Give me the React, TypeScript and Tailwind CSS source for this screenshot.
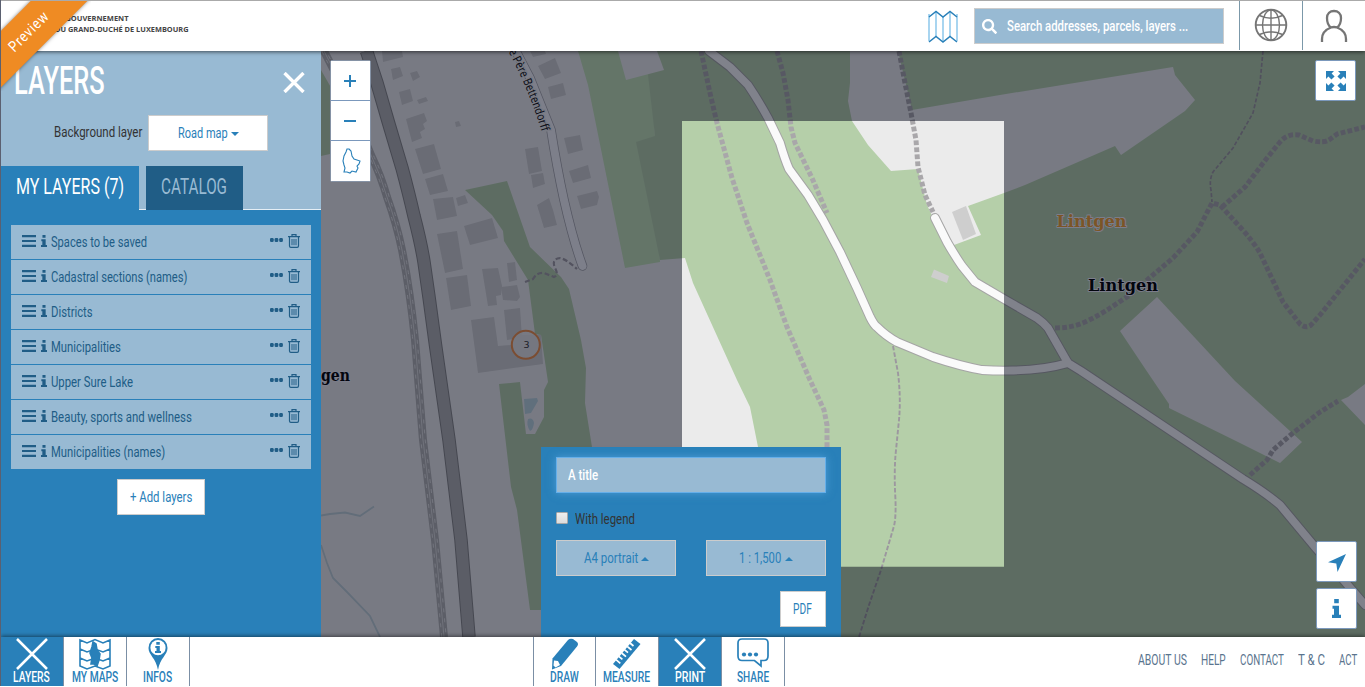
import React, { useLayoutEffect, useRef, useState } from "react";
import { FaSearch } from "react-icons/fa";

const din = "font-['Roboto','Liberation_Sans',sans-serif]";

/* Narrow lettering: squeezes the text horizontally to the given width. */
function Fit({ w, children, className = "pt-0.5" }: { w: number; children: string; className?: string }) {
  const ref = useRef<HTMLSpanElement>(null);
  const [s, setS] = useState(0.8);
  useLayoutEffect(() => {
    if (ref.current) setS(w / ref.current.offsetWidth);
  }, [w, children]);
  return (
    <span className={`inline-block shrink-0 ${className}`} style={{ width: w }}>
      <span ref={ref} className="inline-block origin-left whitespace-nowrap" style={{ transform: `scaleX(${s})` }}>
        {children}
      </span>
    </span>
  );
}

const buildings = [
  "382,51 383,62 403,57 402,51",
  "391,69 400,67 403,76 393,80",
  "410,73 417,71 420,77 413,81",
  "399,92 410,89 413,101 402,105",
  "417,100 426,97 428,101 419,104",
  "406,119 424,113 427,121 423,124 425,129 420,132 422,138 412,142",
  "455,122 459,121 461,126 456,127",
  "415,149 434,144 441,169 423,174",
  "425,179 443,174 448,191 430,195",
  "433,199 453,197 457,216 437,220",
  "456,198 465,195 468,203 458,206",
  "464,226 492,218 498,238 470,245",
  "437,234 457,231 463,269 445,273",
  "446,278 467,275 471,306 451,310",
  "482,269 498,268 502,286 501,295 496,296 497,305 488,306",
  "507,263 515,262 517,280 509,282",
  "501,287 517,285 520,297 517,301 503,300",
  "504,310 520,308 522,338 507,340",
  "471,320 494,317 498,346 511,345 515,335 541,335 543,364 478,373",
  "538,66 555,58 561,73 545,79",
  "548,87 563,83 566,95 551,99",
  "530,51 533,57 546,54 545,51",
  "564,138 580,135 583,150 568,154",
  "569,171 588,165 591,178 573,183",
  "577,196 597,191 599,197 597,205 581,209",
  "525,149 538,147 542,171 529,174",
  "531,175 543,173 545,184 533,188",
  "537,205 549,198 553,210 557,225 544,228",
];

const roads = [
  "M709 51L730 67L748 85Q760 103 768 118L780 143Q785 160 789 169L808 195L823 220L840 252L857 288L870 317Q874 325 877 327Q886 336 897 342L933 357Q960 366 982 370Q1000 371 1013 370.500Q1044 370 1068 363",
  "M935 218L947 242Q955 256 962 266L975 282L1004 299L1037 318Q1044 323 1048 328L1068 363L1081 371L1243 479Q1266 493 1280 505L1315 547L1365 605",
];
const tracks = [
  "M701 51L710 93L717 123L732 178L747 223L770 280L787 327L810 380L824 410L827 425V447",
  "M777 51L783 73L788 100L791 127L795 143L812 178L827 213",
  "M899 51L905 83L911 113L916 140L918 167L925 195L933 212",
  "M1055 328Q1072 328 1085 322Q1100 315 1110 308L1130 295L1147 280L1173 258L1197 232L1212 203L1220 205L1240 227Q1253 241 1260 253L1283 302L1300 324Q1306 329 1311 325L1320 315L1365 259",
  "M1222 207L1245 187L1267 158L1280 142Q1288 133 1299 135L1313 141Q1324 143 1329 140L1337 134L1365 127",
  "M1250 475L1267 460L1273 450L1293 433L1320 412L1338 401",
];
const rail = "M324 51L345 92L371 155Q381 176 387 197Q397 225 402 250Q410 290 415 340L423 440L435 540L444 637";

function MapView() {
  return (
    <svg className="absolute inset-0 h-full w-full" viewBox="321 51 1044 586" preserveAspectRatio="none">
      <rect x="321" y="51" width="1044" height="586" fill="#ebebeb" />
      <path d="M321 70L345 112L336 148L330 154L321 156Z" fill="#b5cfa9" />
      <path d="M578 51H660L652 74L655 136L660 262L625 268L588 85Z" fill="#c2e0b5" />
      <path d="M655 51H1365V637H800L758 447L750 407L737 380L693 283L685 258L660 260L636 142L655 136L648 75Z" fill="#b5cfa9" />
      <path d="M618 51L626 80L664 70L657 51Z" fill="#ebebeb" />
      <path d="M465 190L507 181L530 247L561 277L569 289L581 340L586 368L585 403L592 447L600 610H530L517 510L511 487L499 384L520 382L526 434H535L544 417V390L548 382L541 335L535 334L528 280L504 241L503 231L492 215Z" fill="#b5cfa9" />
      <path d="M850 51V83L848 101L852 121L868 145L891 171L918 169L927 205L935 222L947 240L954 245L981 235L968 206L1004 193L1025 185L1115 146L1121 155L1185 111L1195 100L1175 75L1173 67L1000 95L912 110L898 51Z" fill="#ebebeb" />
      <path d="M1157 297L1120 331L1146 370L1169 404V408L1238 442L1280 463L1302 442L1235 381Z" fill="#ebebeb" />
      <path d="M1341 400L1348 397L1365 384V425Z" fill="#ebebeb" />
      <path d="M524 399L537 398L538 401L531 413L525 414ZM528 419Q533 417 534 423Q533 430 530 431Q526 425 528 419Z" fill="#bbd4dd" />
      <path d="M321 515.500L330 514L345 512.500L360 516L374 506.500M321 545L327 563L333 578L347 592L370 616L380 637" fill="none" stroke="#bfd0d6" strokeWidth="1.800" />
      {buildings.map((p) => (
        <polygon key={p} points={p} fill="#cecece" />
      ))}
      <polygon points="952,212 966,206 976,234 963,240" fill="#cecece" />
      <polygon points="934,269.500 949,276 947,283 931,277" fill="#cecece" />
      <path d={rail} fill="none" stroke="#b2b2b2" strokeWidth="8" />
      <path d={rail} fill="none" stroke="#e4e4e4" strokeWidth="0.800" />
      <path d={rail} transform="translate(-2.200 0)" fill="none" stroke="#e0e0e0" strokeWidth="1" strokeDasharray="4 6" />
      <path d={rail} transform="translate(2.200 0)" fill="none" stroke="#e0e0e0" strokeWidth="1" strokeDasharray="4 6" strokeDashoffset="5" />
      {[["#858585", 13.5], ["#b1b1b1", 11.5]].map(([c, w]) => (
        <path key={c} d="M366.500 51L377 83L388 121L402 168Q409 194 414 216Q421 243 424 262L429 297L435.500 345L449 440L461 540L469 637" fill="none" stroke={c as string} strokeWidth={w} />
      ))}
      {tracks.map((d) => (
        <path key={d} d={d} fill="none" stroke="#a9a7aa" strokeWidth="5" strokeDasharray="4.800 2.200" />
      ))}
      <path d="M1263 51L1260 83L1253 113L1233 148L1213 172Q1209 180 1211 190L1212 202" fill="none" stroke="#9c979f" strokeWidth="1.700" strokeDasharray="4 2" />
      <path d="M893 346L898 373Q901 398 899 420L895.500 455Q894 475 895.500 500Q896 518 894 526L881 570L869 605L859 637" fill="none" stroke="#9c979f" strokeWidth="1.900" strokeDasharray="4.500 2" />
      <path d="M525 282L533 279Q537 272 544 273L554 277Q559 275 555 268Q551 259 560 258Q566 259 577 269" fill="none" stroke="#a09ca3" strokeWidth="2.200" strokeDasharray="5 2.500" />
      <path d="M510 40L530 78L551 130Q557 168 564 200Q573 240 582.500 266" fill="none" stroke="#a3a3a8" strokeWidth="9.500" strokeLinecap="round" />
      <path d="M510 40L530 78L551 130Q557 168 564 200Q573 240 582.500 266" fill="none" stroke="#f5f5f8" strokeWidth="8" strokeLinecap="round" />
      {roads.map((d) => (
        <path key={d} d={d} fill="none" stroke="#a5a5a5" strokeWidth="9.800" strokeLinecap="round" />
      ))}
      {roads.map((d) => (
        <path key={d} d={d} fill="none" stroke="#fafafa" strokeWidth="7.800" strokeLinecap="round" strokeLinejoin="round" />
      ))}
      <path id="street" d="M508.500 51.500Q530 92 543 136" fill="none" />
      <text textLength="87" lengthAdjust="spacingAndGlyphs" className="font-['Noto_Sans',sans-serif] text-[12px]" fill="#111" stroke="#ebebeb" strokeWidth="3" paintOrder="stroke">
        <textPath href="#street" textLength="87" lengthAdjust="spacingAndGlyphs">e Père Bettendorff</textPath>
      </text>
      <circle cx="525.800" cy="344.800" r="14" fill="#ebebeb" fillOpacity="0.800" stroke="#f09048" strokeWidth="2" />
      <text x="526.500" y="348.300" textAnchor="middle" className="font-['DejaVu_Sans',sans-serif] text-[9.500px]" fill="#333">3</text>
      <g className="font-['DejaVu_Serif',serif] text-[16.5px] font-bold" paintOrder="stroke" stroke="#f0f0fa" strokeWidth="1.800" strokeLinejoin="round">
        <text x="1056.500" y="227" textLength="70" lengthAdjust="spacingAndGlyphs" fill="#f0a030">Lintgen</text>
        <text x="1088" y="291" textLength="70" lengthAdjust="spacingAndGlyphs" fill="#000">Lintgen</text>
        <text x="321" y="381" textLength="29" lengthAdjust="spacingAndGlyphs" fill="#000">gen</text>
      </g>
      <path fillRule="evenodd" d="M321 51H1365V637H321ZM682 121V566.700H1004V121Z" fill="rgb(5,9,27)" fillOpacity="0.500" />
    </svg>
  );
}

const layers: [string, number][] = [
  ["Spaces to be saved", 96],
  ["Cadastral sections (names)", 136],
  ["Districts", 42],
  ["Municipalities", 70],
  ["Upper Sure Lake", 82],
  ["Beauty, sports and wellness", 141],
  ["Municipalities (names)", 114],
];

function InfoGlyph({ className }: { className: string }) {
  return (
    <svg viewBox="0 0 9 19" preserveAspectRatio="none" className={className} fill="currentColor">
      <path d="M2.200 0H6.800V4.300H2.200ZM.5 6.800H7V15.800H9V19H0V15.800H2V9.800H.5Z" />
    </svg>
  );
}

function LayerRow({ name, w }: { name: string; w: number }) {
  return (
    <li className="flex h-[34px] items-center bg-[#98bad3] px-[11px] text-[#205d86]">
      <svg width="14" height="12" viewBox="0 0 14 12" className="mb-0.5 shrink-0">
        <path d="M0 1.200H14M0 6H14M0 10.800H14" stroke="currentColor" strokeWidth="2.200" />
      </svg>
      <InfoGlyph className="mb-[3px] ml-[5px] h-[12px] w-[6px] shrink-0" />
      <Fit w={w} className="ml-1 pt-0.5 text-[14.5px] leading-5">{name}</Fit>
      <svg width="13" height="5" viewBox="0 0 13 5" className="mb-[3px] ml-auto shrink-0" fill="currentColor">
        <rect width="3.700" height="4" rx="1.200" />
        <rect x="4.600" width="3.700" height="4" rx="1.200" />
        <rect x="9.200" width="3.700" height="4" rx="1.200" />
      </svg>
      <svg width="12" height="14" viewBox="0 0 12 14" className="mb-0.5 ml-[5px] shrink-0" fill="none" stroke="currentColor">
        <path d="M0 2.700H12M4 2.500V.7H8V2.500M1.500 3V12Q1.500 13.400 2.900 13.400H9.100Q10.500 13.400 10.500 12V3" strokeWidth="1.200" />
        <path d="M4 5V11.200M6 5V11.200M8 5V11.200" strokeWidth="1" />
      </svg>
    </li>
  );
}

function Panel() {
  return (
    <aside className="flex w-[320px] shrink-0 flex-col bg-[#2980b9]">
      <div className="h-[159px] border-b border-[#e4eef5] bg-[#98bad3]">
        <div className="flex h-[60px] items-center justify-between pl-[13px] pr-4 text-white">
          <Fit w={91} className="text-[38px] font-medium leading-[58px]">LAYERS</Fit>
          <svg width="22" height="21" viewBox="0 0 22 21" className="mt-0.5">
            <path d="M1.500 1L20.500 20M20.500 1L1.500 20" stroke="currentColor" strokeWidth="3.400" />
          </svg>
        </div>
        <div className="mt-1 flex h-9 items-center pl-[53px]">
          <Fit w={88} className="text-[14.5px] leading-5 text-[#333]">Background layer</Fit>
          <button className="ml-[6px] flex h-9 w-[120px] items-center justify-center gap-[3px] border border-[#ccc] bg-white text-[14.5px] text-[#2980b9]">
            <Fit w={50}>Road map</Fit>
            <Caret />
          </button>
        </div>
        <div className="mt-[15px] flex h-11 gap-[7px] text-[21.5px]">
          <div className="flex h-11 w-[138px] items-center bg-[#2980b9] pb-px pl-[15px] text-white">
            <Fit w={108} className="">MY LAYERS (7)</Fit>
          </div>
          <div className="flex h-11 w-[97px] items-center bg-[#205d86] pb-px pl-[15px] text-[#98bad3]">
            <Fit w={66} className="">CATALOG</Fit>
          </div>
        </div>
      </div>
      <ul className="mx-[10px] mt-[15px] flex flex-col gap-px">
        {layers.map(([name, w]) => (
          <LayerRow key={name} name={name} w={w} />
        ))}
      </ul>
      <button className="mt-[10px] flex h-9 w-[88px] items-center justify-center self-center border border-[#ccc] bg-white text-[14.5px] text-[#2980b9]">
        <Fit w={62}>+ Add layers</Fit>
      </button>
    </aside>
  );
}

function Caret({ up = false }: { up?: boolean }) {
  return (
    <svg width="8" height="4" viewBox="0 0 8 4" className="mt-px">
      <path d={up ? "M0 4L4 0L8 4Z" : "M0 0L4 4L8 0Z"} fill="currentColor" />
    </svg>
  );
}

function PrintPanel() {
  return (
    <div className="absolute bottom-0 left-[220px] flex h-[190px] w-[300px] flex-col bg-[#2980b9] px-[15px] pt-[10px] text-[14.5px] text-[#2980b9]">
      <div className="flex h-9 items-center border border-[#66afe9] bg-[#98bad3] pl-[11px] text-white shadow-[0_0_8px_rgba(102,175,233,0.6)]">
        <Fit w={30} className="pt-0.5 font-medium">A title</Fit>
      </div>
      <label className="mt-[15px] flex h-5 items-center text-[#333]">
        <span className="h-3 w-3 rounded-[1px] border border-[#a9a9a9] bg-gradient-to-b from-[#eee] to-[#ddd]" />
        <Fit w={60} className="ml-[7px] mt-1">With legend</Fit>
      </label>
      <div className="mt-3 flex justify-between">
        <button className="flex h-9 w-[120px] items-center justify-center gap-[3px] border border-[#ccc] bg-[#98bad3]">
          <Fit w={54}>A4 portrait</Fit>
          <Caret up />
        </button>
        <button className="flex h-9 w-[120px] items-center justify-center gap-1 border border-[#ccc] bg-[#98bad3]">
          <Fit w={42}>1 : 1,500</Fit>
          <Caret up />
        </button>
      </div>
      <button className="mt-[15px] flex h-9 w-[46px] items-center justify-center self-end border border-[#ccc] bg-white pr-px">
        <Fit w={19}>PDF</Fit>
      </button>
    </div>
  );
}

function MapControls() {
  const cell = "flex h-10 items-center justify-center bg-white text-[#2980b9]";
  return (
    <>
      <div className="absolute left-[9px] top-[9px] flex w-[41px] flex-col divide-y divide-[#7b98bc] rounded-[2px] border border-[#8592a5] bg-white">
        <div className={`${cell} pr-px`}>
          <svg width="12" height="12" viewBox="0 0 12 12"><path d="M0 6H12M6 0V12" stroke="currentColor" strokeWidth="2" /></svg>
        </div>
        <div className={`${cell} pr-px`}>
          <svg width="12" height="12" viewBox="0 0 12 12"><path d="M0 6H12" stroke="currentColor" strokeWidth="2" /></svg>
        </div>
        <div className={cell}>
          <svg width="19" height="26" viewBox="0 0 19 26" className="ml-0.5" fill="none" stroke="currentColor" strokeWidth="1.100">
            <path d="M7 1L9 3L10 8L12 11L15 12L18 13L17 16L15 18L16 20L14 24L10 23L8 25L5 24L2 24L3 20L2 17L1 13L2 8L4 4L5 1Z" />
          </svg>
        </div>
      </div>
      <div className="absolute right-[9px] top-[9px] flex h-[41px] w-[41px] items-center justify-center rounded-[2px] border border-[#7b98bc] bg-white text-[#2980b9]">
        <svg width="20" height="20" viewBox="0 0 20 20" fill="currentColor">
          <path id="arrow" d="M0 0H8L5.600 2.400L8.600 5.400L5.400 8.600L2.400 5.600L0 8Z" />
          <use href="#arrow" transform="translate(20 0) scale(-1 1)" />
          <use href="#arrow" transform="translate(0 20) scale(1 -1)" />
          <use href="#arrow" transform="translate(20 20) scale(-1 -1)" />
        </svg>
      </div>
      <div className="absolute bottom-2 right-2 flex flex-col gap-[6px] text-[#2980b9]">
        <div className="flex h-[41px] w-[41px] items-center justify-center rounded-[2px] border border-[#7b98bc] bg-white">
          <svg width="18" height="18" viewBox="0 0 18 18" fill="currentColor" className="mt-0.5">
            <path d="M18 0L9.500 18L8.300 9.500L0 8.300Z" />
          </svg>
        </div>
        <div className="flex h-[41px] w-[41px] items-center justify-center rounded-[2px] border border-[#7b98bc] bg-white">
          <InfoGlyph className="h-[19px] w-[9px]" />
        </div>
      </div>
    </>
  );
}

function Header() {
  return (
    <header className="relative z-10 flex h-[51px] shrink-0 border-t border-[#aaa] bg-white shadow-[0_1px_4px_rgba(0,0,0,0.6)]">
      <div className="flex w-[320px] flex-col pl-[54px] pt-[12px] font-['Open_Sans',sans-serif] text-[7px] font-bold leading-[11px] text-[#444]">
        <Fit w={74} className="">LE GOUVERNEMENT</Fit>
        <Fit w={134} className="">DU GRAND-DUCHÉ DE LUXEMBOURG</Fit>
      </div>
      <svg width="30" height="34" viewBox="0 0 30 34" className="ml-auto mr-4 mt-[9px]" fill="none">
        <path d="M1 4V31M8 1.500V27M15 6V31M22 1.500V27M29 4V31" stroke="#70b9e6" strokeWidth="1.200" />
        <path d="M1 7L8 1.500L15 7L22 1.500L29 7M1 32L8 26.500L15 32L22 26.500L29 32" stroke="#2980b9" strokeWidth="1.500" />
      </svg>
      <div className="mt-[7px] flex h-9 w-[250px] items-center border border-[#ccc] bg-[#98bad3] pl-[7px] text-white">
        <FaSearch className="h-[15px] w-[15px]" />
        <Fit w={181} className="ml-[10px] pt-0.5 text-[14.5px] font-medium">Search addresses, parcels, layers ...</Fit>
      </div>
      <div className="ml-[15px] flex h-[49px] w-[63px] items-center justify-center border-l border-[#7b98a9] pb-0.5">
        <svg width="34" height="34" viewBox="0 0 34 34" fill="none" stroke="#757575" strokeWidth="1.400">
          <circle cx="17" cy="17" r="15.300" strokeWidth="1.900" />
          <path d="M17 2V32M2 17H32M5.500 7.500Q17 13 28.500 7.500M5.500 26.500Q17 21 28.500 26.500" />
          <ellipse cx="17" cy="17" rx="8.500" ry="15" />
        </svg>
      </div>
      <div className="flex h-[49px] w-[63px] items-center justify-center border-l border-[#7b98a9]">
        <svg width="28" height="34" viewBox="0 0 28 34" fill="none" stroke="#757575" strokeWidth="2.300">
          <path d="M2 33V30Q2 22 11 18.500C8 16.500 7 13 7 9C7 4.500 10 2 14 2C18 2 21 4.500 21 9C21 13 20 16.500 17 18.500Q26 22 26 30V33M11 18.500Q14 17.500 17 18.500" />
        </svg>
      </div>
    </header>
  );
}

const cross = (
  <svg width="32" height="32" viewBox="0 0 32 32"><path d="M1 1L31 31M31 1L1 31" stroke="currentColor" strokeWidth="2.500" /></svg>
);

function Tool({ label, w, active, narrow, children }: { label: string; w: number; active?: boolean; narrow?: boolean; children: React.ReactNode }) {
  return (
    <div className={`flex h-[49px] flex-col items-center border-r border-[#7b8fa5] ${narrow ? "w-[62px]" : "w-[63px]"} ${active ? "bg-[#2980b9] text-white" : "bg-white text-[#2980b9]"}`}>
      <div className="flex h-[33px] items-center justify-center pt-px">{children}</div>
      <Fit w={w} className="mr-px text-[14.5px] font-medium leading-[15px]">{label}</Fit>
    </div>
  );
}

function Footer() {
  return (
    <footer className="relative z-10 flex h-[49px] shrink-0 bg-white shadow-[0_-1px_4px_rgba(0,0,0,0.5)]">
      <nav className="flex w-[532px]">
        <Tool label="LAYERS" w={37} active>{cross}</Tool>
        <Tool label="MY MAPS" w={46}>
          <svg width="32" height="32" viewBox="0 0 32 32" fill="none" stroke="currentColor" strokeWidth="1.600">
            <path d="M1 2L8 5L16 1.500L24 5L31 2V28L24 31L16 28L8 31L1 28ZM1 11L8 14L16 11L24 14L31 11M1 20L8 23L16 20L24 23L31 20" />
            <path d="M14 4L17 6L18 12L21 16L20 22L18 28L15 26L12 26L13 20L11 15L13 9Z" fill="currentColor" />
          </svg>
        </Tool>
        <Tool label="INFOS" w={29}>
          <svg width="20" height="32" viewBox="0 0 20 32">
            <path d="M10 0A9.600 9.600 0 0 0 .5 10C.5 17 8 20 10 32C12 20 19.500 17 19.500 10A9.600 9.600 0 0 0 10 0Z" fill="currentColor" />
            <circle cx="10" cy="9.700" r="7.600" fill="#fff" />
            <path d="M8.300 4H11.800V6.700H8.300ZM7.300 8H11.800V13H13V15H7V13H8.500V10H7.300Z" fill="currentColor" />
          </svg>
        </Tool>
      </nav>
      <nav className="flex border-l border-[#7b8fa5]">
        <Tool label="DRAW" w={29} narrow>
          <svg width="28" height="32" viewBox="0 0 28 32" fill="currentColor">
            <path d="M17 2Q19 0 22 1L26 4Q28 6 26 8.500L10 28L1 31.500L1.500 20.500Z" />
            <path d="M3 22.500L7 23L9 27L4.500 29.500L2.500 27.500Z" fill="#fff" />
          </svg>
        </Tool>
        <Tool label="MEASURE" w={47}>
          <svg width="28" height="32" viewBox="0 0 28 32" fill="currentColor">
            <path d="M21 1L27.500 6L6.500 31L0 26Z" />
            <path d="M17 5L20.500 8M14.200 8.300L18.500 12M11.400 11.700L15 14.700M8.600 15L13 18.700M5.800 18.400L9.400 21.400M3 21.700L7.300 25.300" stroke="#fff" strokeWidth="1.700" />
          </svg>
        </Tool>
        <Tool label="PRINT" w={30} active>{cross}</Tool>
        <Tool label="SHARE" w={32}>
          <svg width="32" height="30" viewBox="0 0 32 30" fill="none" stroke="currentColor" strokeWidth="1.700" className="mb-0.5">
            <path d="M5 1H27Q31 1 31 5V18Q31 22.500 27 22.500H24V28L17.500 22.500H5Q1 22.500 1 18V5Q1 1 5 1Z" />
            <g fill="currentColor" stroke="none"><circle cx="7" cy="16.500" r="2.100" /><circle cx="13" cy="16.500" r="2.100" /><circle cx="19" cy="16.500" r="2.100" /></g>
          </svg>
        </Tool>
      </nav>
      <nav className="ml-auto mr-2 flex items-center gap-[14px] pb-[3px] text-[14.5px] text-[#5a748e]">
        <Fit w={49}>ABOUT US</Fit>
        <Fit w={25}>HELP</Fit>
        <Fit w={44}>CONTACT</Fit>
        <Fit w={27}>T &amp; C</Fit>
        <Fit w={18}>ACT</Fit>
      </nav>
    </footer>
  );
}

export default function App() {
  return (
    <div className={`relative h-[687px] w-[1365px] overflow-hidden bg-white ${din}`}>
      <div className="flex h-[686px] flex-col overflow-hidden border-l border-[#5b6070]">
        <Header />
        <main className="flex min-h-0 flex-1">
          <Panel />
          <section className="relative flex-1 overflow-hidden">
            <MapView />
            <MapControls />
            <PrintPanel />
          </section>
        </main>
        <Footer />
      </div>
      <div className="absolute left-px top-px z-20 h-[90px] w-[90px] overflow-hidden">
        <div className="absolute -left-[41px] top-[9px] flex h-[40px] w-[140px] -rotate-45 items-center justify-center bg-[#ef8b23] pr-1 text-[15px] tracking-[1px] text-white shadow-[0_0_4px_rgba(0,0,0,0.5)]">
          <Fit w={50} className="">Preview</Fit>
        </div>
      </div>
    </div>
  );
}
